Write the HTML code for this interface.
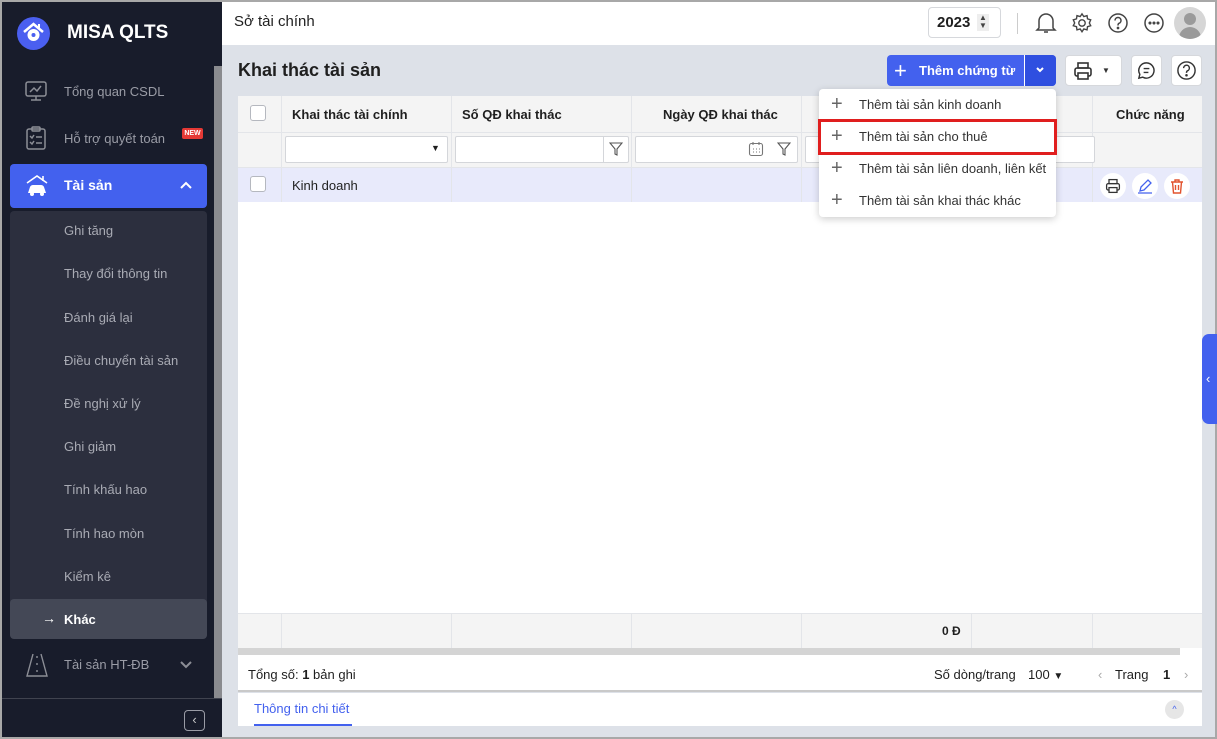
<!DOCTYPE html>
<html><head><meta charset="utf-8"><style>
*{box-sizing:border-box;margin:0;padding:0}
body{width:1217px;height:739px;overflow:hidden;background:#a8a8a8;font-family:"Liberation Sans",sans-serif;font-size:13px;color:#1f1f1f;position:relative}
.a{position:absolute}
.side{left:2px;top:2px;width:220px;height:735px;background:#181c2b}
.nav{color:#9a9ca6;font-size:13px}
.sub{color:#a9abb4;font-size:13px;left:64px}
.main{left:222px;top:2px;width:993px;height:735px;background:#dde1e8}
.hdr{left:222px;top:2px;width:993px;height:43px;background:#fff}
.vl{position:absolute;top:0;width:1px;background:#e3e5e9}
.cb{position:absolute;width:16px;height:16px;border:1px solid #b5b8bf;border-radius:3px;background:#fff}
.inp{position:absolute;height:27px;border:1px solid #d4d6da;background:#fff;border-radius:2px}
.dd{position:absolute;left:819px;top:89px;width:237px;height:128px;background:#fff;border-radius:4px;box-shadow:0 2px 8px rgba(0,0,0,.2)}
.dd div{position:absolute;left:40px;font-size:13px;color:#333}
.dd span{position:absolute;left:12px;font-size:20px;color:#666;font-weight:300}
.ib{position:absolute;width:26px;height:26px;border-radius:13px;background:#fff}
</style></head><body>
<div class="a side"></div>
<div class="a" style="left:17px;top:17px;width:33px;height:33px;border-radius:17px;background:#4a5ff0"></div>
<svg class="a" style="left:21px;top:20px" width="25" height="26" viewBox="0 0 25 26"><path d="M3 12 L12.5 4 L22 12" stroke="#fff" stroke-width="2.5" fill="none"/><circle cx="12.5" cy="15" r="6" fill="#fff"/><circle cx="12.5" cy="15" r="2" fill="#4a5ff0"/><path d="M17 7 V4 h2 v4" fill="#fff"/></svg>
<div class="a" style="left:67px;top:22px;color:#fff;font-weight:bold;font-size:19px">MISA QLTS</div>
<div class="a" style="left:214px;top:66px;width:8px;height:632px;background:#8a8b8f"></div>
<svg class="a" style="left:24px;top:79px" width="24" height="24" viewBox="0 0 24 24" fill="none" stroke="#8c8e96" stroke-width="1.5"><rect x="2" y="3" width="20" height="14" rx="2"/><path d="M12 17v4M7 21h10M6 13l4-4 3 3 4-5"/></svg>
<div class="a nav" style="left:64px;top:84px">Tổng quan CSDL</div>
<svg class="a" style="left:25px;top:126px" width="22" height="25" viewBox="0 0 22 25" fill="none" stroke="#8c8e96" stroke-width="1.5"><rect x="2" y="3" width="18" height="20" rx="2"/><rect x="7" y="1" width="8" height="4" rx="1"/><path d="M5 10l2 2 2-3M11 11h6M5 16l2 2 2-3M11 17h6"/></svg>
<div class="a nav" style="left:64px;top:131px">Hỗ trợ quyết toán</div>
<div class="a" style="left:182px;top:128px;width:21px;height:11px;background:#e53935;border-radius:2px;color:#fff;font-size:7px;font-weight:bold;text-align:center;line-height:11px">NEW</div>
<div class="a" style="left:10px;top:164px;width:197px;height:44px;background:#4361ee;border-radius:4px"></div>
<svg class="a" style="left:25px;top:174px" width="24" height="24" viewBox="0 0 24 24"><path d="M2 9 L12 2 L22 9 M18 2v5" stroke="#fff" stroke-width="1.6" fill="none"/><path d="M3 19 L5 13 Q6 11 8 11 H16 Q18 11 19 13 L21 19 Z" fill="#fff"/><circle cx="7" cy="20" r="2" fill="#fff"/><circle cx="17" cy="20" r="2" fill="#fff"/></svg>
<div class="a" style="left:64px;top:177px;color:#fff;font-weight:bold;font-size:14px">Tài sản</div>
<svg class="a" style="left:179px;top:180px" width="14" height="10" viewBox="0 0 14 10"><path d="M2 8 L7 3 L12 8" stroke="#fff" stroke-width="2" fill="none"/></svg>
<div class="a" style="left:10px;top:211px;width:197px;height:427px;background:#2c2f3e;border-radius:4px"></div>
<div class="a sub" style="top:223px">Ghi tăng</div>
<div class="a sub" style="top:266px">Thay đổi thông tin</div>
<div class="a sub" style="top:310px">Đánh giá lại</div>
<div class="a sub" style="top:353px">Điều chuyển tài sản</div>
<div class="a sub" style="top:396px">Đề nghị xử lý</div>
<div class="a sub" style="top:439px">Ghi giảm</div>
<div class="a sub" style="top:482px">Tính khấu hao</div>
<div class="a sub" style="top:526px">Tính hao mòn</div>
<div class="a sub" style="top:569px">Kiểm kê</div>
<div class="a" style="left:10px;top:599px;width:197px;height:40px;background:#444856;border-radius:4px"></div>
<div class="a" style="left:42px;top:610px;color:#fff;font-size:14px">→</div>
<div class="a" style="left:64px;top:612px;color:#fff;font-weight:bold">Khác</div>
<svg class="a" style="left:25px;top:652px" width="24" height="26" viewBox="0 0 24 26" fill="none" stroke="#8c8e96" stroke-width="1.4"><path d="M8 2 L2 24 H22 L16 2"/><path d="M12 4v4M12 11v4M12 18v4" stroke-dasharray="2 2"/></svg>
<div class="a nav" style="left:64px;top:657px">Tài sản HT-ĐB</div>
<svg class="a" style="left:179px;top:660px" width="14" height="10" viewBox="0 0 14 10"><path d="M2 2 L7 7 L12 2" stroke="#8c8e96" stroke-width="2" fill="none"/></svg>
<div class="a" style="left:2px;top:698px;width:220px;height:1px;background:#40434f"></div>
<div class="a" style="left:184px;top:710px;width:21px;height:21px;border:1px solid #9a9ca6;border-radius:4px;color:#ccc;text-align:center;line-height:18px;font-size:13px">‹</div>

<div class="a main"></div>
<div class="a hdr"></div>
<div class="a" style="left:234px;top:13px;font-size:15px">Sở tài chính</div>
<div class="a" style="left:928px;top:7px;width:73px;height:31px;border:1px solid #d6d8dc;border-radius:4px"></div>
<div class="a" style="left:937px;top:14px;font-weight:bold;font-size:15px">2023</div>
<div class="a" style="left:977px;top:14px;width:12px;height:17px;background:#eee;font-size:8px;line-height:8px;text-align:center;color:#444">▲<br>▼</div>
<div class="a" style="left:1017px;top:13px;width:1px;height:21px;background:#ccc"></div>
<svg class="a" style="left:1035px;top:11px" width="22" height="24" viewBox="0 0 22 24" fill="none" stroke="#444" stroke-width="1.5"><path d="M4 17V10a7 7 0 0 1 14 0v7l2 2H2z M9 21h4"/></svg>
<svg class="a" style="left:1071px;top:12px" width="22" height="22" viewBox="0 0 24 24" fill="none" stroke="#444" stroke-width="1.5"><circle cx="12" cy="12" r="3.5"/><path d="M12 2l2 3 3.5-1 .5 3.5 3.5 1-1.5 3.5 1.5 3-3.5 1-.5 3.5-3.5-1-2 3-2-3-3.5 1-.5-3.5-3.5-1 1.5-3-1.5-3.5 3.5-1 .5-3.5 3.5 1z"/></svg>
<svg class="a" style="left:1107px;top:12px" width="22" height="22" viewBox="0 0 22 22" fill="none" stroke="#444" stroke-width="1.5"><circle cx="11" cy="11" r="9"/><path d="M8 8.5a3 3 0 1 1 4 2.8c-1 .4-1 1-1 2.2"/><circle cx="11" cy="16" r=".6" fill="#444"/></svg>
<svg class="a" style="left:1143px;top:12px" width="22" height="22" viewBox="0 0 22 22" fill="none" stroke="#444" stroke-width="1.5"><circle cx="11" cy="11" r="9"/><circle cx="7" cy="11" r=".8" fill="#444"/><circle cx="11" cy="11" r=".8" fill="#444"/><circle cx="15" cy="11" r=".8" fill="#444"/></svg>
<div class="a" style="left:1174px;top:7px;width:32px;height:32px;border-radius:16px;background:#d6d6d6;overflow:hidden"><div class="a" style="left:10px;top:6px;width:12px;height:12px;border-radius:6px;background:#9a9a9a"></div><div class="a" style="left:5px;top:20px;width:22px;height:16px;border-radius:11px 11px 0 0;background:#9a9a9a"></div></div>

<div class="a" style="left:238px;top:60px;font-size:18px;font-weight:bold">Khai thác tài sản</div>
<div class="a" style="left:887px;top:55px;width:169px;height:31px;background:#4361ee;border-radius:4px"></div>
<div class="a" style="left:1024px;top:55px;width:32px;height:31px;background:#2f4fe0;border-radius:0 4px 4px 0;border-left:1px solid #fff"></div>
<div class="a" style="left:894px;top:58px;color:#fff;font-size:22px;font-weight:300">+</div>
<div class="a" style="left:919px;top:63px;color:#fff;font-weight:bold">Thêm chứng từ</div>
<svg class="a" style="left:1035px;top:66px" width="10" height="8" viewBox="0 0 10 8"><path d="M2 2 L5 5 L8 2" stroke="#fff" stroke-width="2" fill="none"/></svg>
<div class="a" style="left:1065px;top:55px;width:57px;height:31px;background:#fff;border:1px solid #d6d8dc;border-radius:4px"></div>
<svg class="a" style="left:1073px;top:61px" width="20" height="20" viewBox="0 0 20 20" fill="none" stroke="#333" stroke-width="1.6"><rect x="5" y="2" width="10" height="5"/><rect x="2" y="7" width="16" height="8" rx="2"/><rect x="5" y="12" width="10" height="6" fill="#fff"/></svg>
<div class="a" style="left:1102px;top:66px;font-size:8px;color:#333">▼</div>
<div class="a" style="left:1131px;top:55px;width:31px;height:31px;background:#fff;border:1px solid #d6d8dc;border-radius:4px"></div>
<svg class="a" style="left:1136px;top:60px" width="21" height="21" viewBox="0 0 22 22" fill="none" stroke="#333" stroke-width="1.5"><path d="M11 3a8 8 0 1 1-4 15l-4 1 1-4A8 8 0 0 1 11 3z M8 9h6M8 13h5"/></svg>
<div class="a" style="left:1171px;top:55px;width:31px;height:31px;background:#fff;border:1px solid #d6d8dc;border-radius:4px"></div>
<svg class="a" style="left:1176px;top:60px" width="21" height="21" viewBox="0 0 22 22" fill="none" stroke="#333" stroke-width="1.5"><circle cx="11" cy="11" r="9"/><path d="M8 8.5a3 3 0 1 1 4 2.8c-1 .4-1 1-1 2.2"/><circle cx="11" cy="16" r=".6" fill="#333"/></svg>

<div class="a" style="left:238px;top:96px;width:964px;height:594px;background:#fff">
 <div class="a" style="left:0;top:0;width:964px;height:72px;background:#f4f4f4;border-bottom:1px solid #e3e5e9"></div>
 <div class="a" style="left:0;top:36px;width:964px;height:1px;background:#e3e5e9"></div>
 <div class="a" style="left:0;top:72px;width:964px;height:34px;background:#e8eafb"></div>
 <div class="a" style="left:0;top:517px;width:964px;height:35px;background:#f4f4f4;border-top:1px solid #e3e5e9"></div>
 <div class="vl" style="left:43px;height:106px"></div><div class="vl" style="left:213px;height:106px"></div><div class="vl" style="left:393px;height:106px"></div><div class="vl" style="left:563px;height:106px"></div><div class="vl" style="left:733px;height:106px"></div><div class="vl" style="left:854px;height:106px"></div>
 <div class="vl" style="left:43px;top:517px;height:35px"></div><div class="vl" style="left:213px;top:517px;height:35px"></div><div class="vl" style="left:393px;top:517px;height:35px"></div><div class="vl" style="left:563px;top:517px;height:35px"></div><div class="vl" style="left:733px;top:517px;height:35px"></div><div class="vl" style="left:854px;top:517px;height:35px"></div>
 <div class="cb" style="left:12px;top:9px"></div>
 <div class="cb" style="left:12px;top:80px"></div>
 <div class="a" style="left:54px;top:11px;font-weight:bold">Khai thác tài chính</div>
 <div class="a" style="left:224px;top:11px;font-weight:bold">Số QĐ khai thác</div>
 <div class="a" style="left:425px;top:11px;font-weight:bold">Ngày QĐ khai thác</div>
 <div class="a" style="left:878px;top:11px;font-weight:bold">Chức năng</div>
 <div class="inp" style="left:47px;top:40px;width:163px"></div><div class="a" style="left:193px;top:47px;font-size:9px">▼</div>
 <div class="inp" style="left:217px;top:40px;width:174px"></div><div class="a" style="left:365px;top:40px;width:1px;height:27px;background:#d4d6da"></div>
 <svg class="a" style="left:371px;top:46px" width="14" height="15" viewBox="0 0 14 15" fill="none" stroke="#555" stroke-width="1.1"><path d="M1 1h12L8 7v6l-2-1V7z"/></svg>
 <div class="inp" style="left:397px;top:40px;width:163px"></div>
 <svg class="a" style="left:510px;top:45px" width="16" height="16" viewBox="0 0 16 16" fill="none" stroke="#777" stroke-width="1.1"><rect x="1.5" y="2.5" width="13" height="12" rx="2"/><path d="M5 1v3M11 1v3M5 8h1M8 8h1M11 8h1M5 11h1M8 11h1M11 11h1"/></svg>
 <svg class="a" style="left:539px;top:46px" width="14" height="15" viewBox="0 0 14 15" fill="none" stroke="#555" stroke-width="1.1"><path d="M1 1h12L8 7v6l-2-1V7z"/></svg>
 <div class="inp" style="left:567px;top:40px;width:290px"></div>
 <div class="a" style="left:54px;top:82px">Kinh doanh</div>
 <div class="ib" style="left:862px;top:77px"></div><svg class="a" style="left:867px;top:82px" width="16" height="16" viewBox="0 0 20 20" fill="none" stroke="#333" stroke-width="1.6"><rect x="5" y="2" width="10" height="5"/><rect x="2" y="7" width="16" height="8" rx="2"/><rect x="5" y="12" width="10" height="6" fill="#fff"/></svg>
 <div class="ib" style="left:894px;top:77px"></div><svg class="a" style="left:899px;top:82px" width="16" height="16" viewBox="0 0 16 16" fill="none" stroke="#4361ee" stroke-width="1.3"><path d="M3 13l1-4 7-7 3 3-7 7z M1 15h14"/></svg>
 <div class="ib" style="left:926px;top:77px"></div><svg class="a" style="left:931px;top:82px" width="16" height="16" viewBox="0 0 16 16" fill="none" stroke="#e2532f" stroke-width="1.4"><path d="M2 4h12M6 4V2h4v2M3.5 4l1 11h7l1-11M6.5 7v5M9.5 7v5"/></svg>
 <div class="a" style="left:704px;top:528px;font-weight:bold;font-size:12px">0 Đ</div>
 <div class="a" style="left:0;top:552px;width:942px;height:7px;background:#d4d4d4"></div>
 <div class="a" style="left:10px;top:571px">Tổng số: <b>1</b> bản ghi</div>
 <div class="a" style="left:696px;top:571px">Số dòng/trang</div>
 <div class="a" style="left:790px;top:571px">100 <b style="font-size:10px">▼</b></div>
 <div class="a" style="left:860px;top:571px;color:#aaa">‹</div>
 <div class="a" style="left:877px;top:571px">Trang</div>
 <div class="a" style="left:925px;top:571px;font-weight:bold">1</div>
 <div class="a" style="left:946px;top:571px;color:#aaa">›</div>
</div>
<div class="a" style="left:238px;top:690px;width:964px;height:2px;background:#c9c9c9"></div>
<div class="a" style="left:238px;top:693px;width:964px;height:33px;background:#fff"></div>
<div class="a" style="left:254px;top:701px;color:#4361ee">Thông tin chi tiết</div>
<div class="a" style="left:254px;top:724px;width:98px;height:2px;background:#4361ee"></div>
<div class="a" style="left:1165px;top:700px;width:19px;height:19px;border-radius:10px;background:#e6e6e6;color:#4361ee;text-align:center;font-size:9px;line-height:19px">^</div>
<div class="a" style="left:1202px;top:334px;width:15px;height:90px;background:#4361ee;border-radius:7px 0 0 7px;color:#fff;font-size:13px;line-height:90px;padding-left:4px">‹</div>

<div class="dd">
 <span style="top:4px">+</span><div style="top:8px">Thêm tài sản kinh doanh</div>
 <span style="top:36px">+</span><div style="top:40px">Thêm tài sản cho thuê</div>
 <span style="top:68px">+</span><div style="top:72px">Thêm tài sản liên doanh, liên kết</div>
 <span style="top:100px">+</span><div style="top:104px">Thêm tài sản khai thác khác</div>
</div>
<div class="a" style="left:818px;top:119px;width:239px;height:36px;border:3px solid #e01e1e"></div>
</body></html>
